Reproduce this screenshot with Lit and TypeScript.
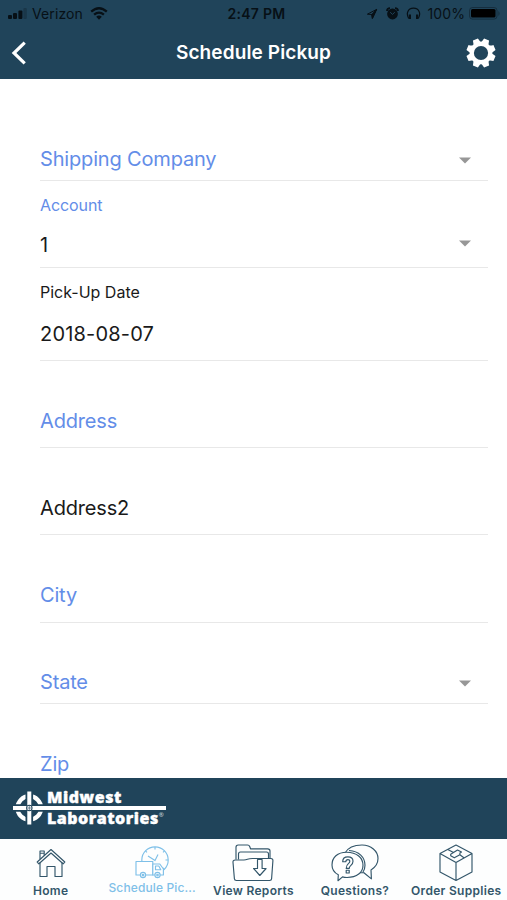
import { LitElement, html, css, svg, nothing } from "lit";
import { customElement, property } from "lit/decorators.js";
import { classMap } from "lit/directives/class-map.js";

type Field = { label: string; value?: string; tone: "link" | "ink"; select?: boolean; size: string };

const FIELDS: Field[] = [
  { label: "Shipping Company", tone: "link", select: true, size: "first" },
  { label: "Account", value: "1", tone: "link", select: true, size: "account" },
  { label: "Pick-Up Date", value: "2018-08-07", tone: "ink", size: "date" },
  { label: "Address", tone: "link", size: "line" },
  { label: "Address2", tone: "ink", size: "line" },
  { label: "City", tone: "link", size: "line tall" },
  { label: "State", tone: "link", select: true, size: "state" },
  { label: "Zip", tone: "link", size: "zip" },
];

@customElement("status-bar")
export class StatusBar extends LitElement {
  static styles = css`
    :host { display: flex; height: 27px; align-items: center; color: #071016; font: 14px/18px Inter, sans-serif; padding: 0 6px 0 8px; box-sizing: border-box; }
    .side { flex: 1; display: flex; align-items: center; }
    .right { justify-content: flex-end; }
    .carrier { margin: 1px 7px 0 5px; letter-spacing: 0.1px; }
    .time { font-weight: 600; letter-spacing: 0.3px; margin: 1px 0 0 4px; }
    .pct { margin: 1px 4px 0 6px; letter-spacing: 0.1px; }
    svg { display: block; flex: none; }
    .gap { margin-left: 8px; }
    .gap2 { margin-left: 7px; }
  `;
  render() {
    return html`
      <div class="side">
        <svg width="19" height="12" viewBox="0 0 19 12" fill="currentColor">
          <rect x="0" y="7" width="4" height="4" rx="1"/><rect x="5" y="5" width="4" height="6" rx="1"/>
          <rect x="10.4" y="2.5" width="4" height="8.5" rx="1"/><rect x="15.4" y="0" width="3.4" height="11" rx="1" opacity=".25"/>
        </svg>
        <span class="carrier">Verizon</span>
        <svg width="18" height="13" viewBox="0 0 18 13" fill="none" stroke="currentColor" stroke-width="2.3">
          <path d="M1.2 4.7Q9-2.3 16.8 4.7"/><path d="M4.1 7.7Q9 3.5 13.9 7.7"/><path d="M6.2 9.8Q9 7.4 11.8 9.8L9 12.7z" fill="currentColor" stroke="none"/>
        </svg>
      </div>
      <span class="time">2:47 PM</span>
      <div class="side right">
        <svg width="12" height="12" viewBox="0 0 12 12" fill="none" stroke="currentColor" stroke-width="1"><path d="M1.4 6.2L10.6 1.4 6.4 10.4 5.8 6.5z"/><path d="M5.8 6.5L10.6 1.4 6.4 10.4z" fill="currentColor"/></svg>
        <svg class="gap" width="13" height="13" viewBox="0 0 13 13"><circle cx="6.5" cy="7" r="5.4" fill="currentColor"/><path d="M1 4A3 3 0 0 1 4 1.1M9 1.1A3 3 0 0 1 12 4" stroke="currentColor" stroke-width="1.8" fill="none"/><path d="M4.2 5.2L6.5 7.4 8.8 5.2" fill="none" stroke="#20445a" stroke-width="1"/></svg>
        <svg class="gap2" width="15" height="13" viewBox="0 0 15 13" fill="none" stroke="currentColor"><path d="M2.7 11.5C0 7 1.4 1.2 7.5 1.2S15 7 12.3 11.5" stroke-width="1.2"/><path d="M3.9 7.5v4.6M11.1 7.5v4.6" stroke-width="2.2"/></svg>
        <span class="pct">100%</span>
        <svg width="32" height="13" viewBox="0 0 32 13"><rect x=".5" y=".5" width="27.5" height="11.6" rx="3" fill="none" stroke="currentColor" opacity=".4"/><rect x="2" y="2" width="24.5" height="8.6" rx="1.5" fill="#000"/><path d="M29.5 4v5q2-2.5 0-5" fill="currentColor" opacity=".5"/></svg>
      </div>
    `;
  }
}

@customElement("form-field")
export class FormField extends LitElement {
  @property({ attribute: false }) field!: Field;
  static styles = css`
    :host { display: block; font-family: Inter, sans-serif; color: #1a1a1a; }
    .row { box-sizing: border-box; display: flex; flex-direction: column; justify-content: flex-end; margin-left: 40px; margin-right: 19px; border-bottom: 1px solid #e8e8e8; }
    .first { height: 102px; padding-bottom: 9px; }
    .account { height: 87px; padding-bottom: 10px; }
    .date { height: 93px; padding-bottom: 14px; }
    .line { height: 87px; padding-bottom: 14px; }
    .tall { height: 88px; padding-bottom: 15px; }
    .state { height: 81px; padding-bottom: 9px; }
    .zip { height: 82px; padding-bottom: 9px; }
    .label { font-size: 16px; line-height: 20px; letter-spacing: -0.1px; }
    .date .label { letter-spacing: 0; }
    .account .label { margin-bottom: 18px; }
    .date .label { margin-bottom: 20px; }
    .main { display: flex; align-items: center; justify-content: space-between; font-size: 20px; line-height: 24px; padding-right: 17px; letter-spacing: 0.18px; }
    .link .label, .link .bare { color: #638de8; }
    .bare { letter-spacing: -0.17px; }
    svg { display: block; margin-top: 2px; }
    .account svg { margin-top: -4px; }
  `;
  render() {
    const f = this.field;
    return html`<div class="row ${f.size} ${f.tone}">
      ${f.value ? html`<div class="label">${f.label}</div>` : nothing}
      <div class="main">
        <span class=${classMap({ bare: !f.value })}>${f.value ?? f.label}</span>
        ${f.select ? html`<svg width="12" height="7" viewBox="0 0 12 7"><path d="M0 .5h12L6 6.5z" fill="#979797"/></svg>` : nothing}
      </div>
    </div>`;
  }
}

const home = svg`<path d="M1.2 14L15 1.5 28.8 14l-1.7 1.8L15 5 2.9 15.8z"/><path d="M4 14.5V28.5h7V18.5h8v10h7v-14M4 11V3h4.2v4.5M4 5.2h4.2"/>`;
const truck = svg`<circle cx="20" cy="14" r="13.2"/><path d="M13 10l7 4.6L23 8.5M20 1v2.5M33 14h-2.5M10.5 4.8l1.5 1.5M29.5 4.8L28 6.3M29.5 23.3L28 21.8"/><path d="M1 15.5h16.8V29H1z" fill="#fff"/><path d="M17.8 18h7l3.6 5V29H17.8z" fill="#fff"/><path d="M20.5 20h3.3l2 3.7h-5.3z"/><circle cx="8" cy="29" r="2.6" fill="#fff"/><circle cx="22.5" cy="29" r="2.6" fill="#fff"/><circle cx="8" cy="29" r=".8"/><circle cx="22.5" cy="29" r=".8"/>`;
const folder = svg`<path d="M4 15.5V3.2Q4 1 6.2 1h9.3q1.8 0 2.3 1.8l.7 2h17.2q2.3 0 2.3 2.3v9.5"/><path d="M6.5 15.5V10q0-2 2-2h26q2 0 2 2v5.5"/><path d="M6.5 16H3.2q-2.4 0-2.2 2.3l1.4 16.5q.1 1.7 2 1.7h33.2q1.9 0 2-1.7l1.3-18q.1-2.3-2-2.3H20.5q-3 0-5 .8t-4 .7z" fill="#fff"/><path d="M25.5 15.5h4.6v9h4L27.8 31.5 21.6 24.5h3.9z" fill="#fff"/>`;
const chat = svg`<path d="M14 9C17 3.5 23.5 1 31 1c9 0 16 6 16 13.5 0 5-2.7 8.8-7 11.4l.4 9-7.5-6.2q-2.5.2-4-.2"/><path d="M15.5 8.2C26 8.2 32 14 32 21.2S26 33.5 16 33.5q-2.5 0-4.5-.6L7 36.7l.3-5.9C3.5 28.8 1 25 1 21 1 13.5 6.5 8.2 15.5 8.2z" fill="#fff"/><path d="M18 6.5c10 .7 16 6.6 16 14.7q0 4-2.2 7.3"/><path d="M11.7 17.7c0-3.2 2.3-4.8 5.2-4.8 3 0 5.1 1.7 5.1 4.3 0 4.4-3.8 3.8-3.8 7.2h-3c0-5 3.6-4.8 3.6-7 0-1.2-.8-1.8-1.9-1.8-1.3 0-2 .8-2.1 2.1zM15.2 26.2h3v2.8h-3z" fill="#fff"/>`;
const box = svg`<path d="M17 1l16 8.6V28L17 36.5 1 28V9.6zM1 9.6l16 9 16-9M17 18.6v17.9"/><path d="M8.8 5.4l5.7 3.2-2.8 1.6v1.6l3.6 2 5.6-3V9l1.6-1-4-2-4 2.6M25.2 14l-4.3-3.2"/>`;

const TABS = [
  { name: "Home", art: home, w: 30, h: 30, cls: "home" },
  { name: "Schedule Pic...", art: truck, w: 34, h: 33, cls: "pick" },
  { name: "View Reports", art: folder, w: 42, h: 38, cls: "reports" },
  { name: "Questions?", art: chat, w: 48, h: 39, cls: "questions" },
  { name: "Order Supplies", art: box, w: 34, h: 38, cls: "supplies" },
];

@customElement("tab-bar")
export class TabBar extends LitElement {
  static styles = css`
    :host { display: grid; grid-template-columns: repeat(5, 1fr); height: 61px; background: #fdfefe; font: 600 12px/14px Inter, sans-serif; color: #33566a; }
    .tab { display: flex; flex-direction: column; align-items: center; justify-content: flex-end; padding-bottom: 2px; gap: 2px; white-space: nowrap; letter-spacing: 0.3px; }
    .home { gap: 6px; }
    .pick { color: #7fc0e8; padding-bottom: 5px; gap: 2px; letter-spacing: 0.12px; font-weight: 500; }
    .questions { gap: 1px; }
    svg { display: block; stroke: currentColor; stroke-width: 1.15; fill: none; stroke-linejoin: round; }
  `;
  render() {
    return TABS.map((t) => html`<div class="tab ${t.cls}">
      <svg width=${t.w} height=${t.h} viewBox="0 0 ${t.w} ${t.h}">${t.art}</svg><span>${t.name}</span>
    </div>`);
  }
}

@customElement("app-root")
export class AppRoot extends LitElement {
  static styles = css`
    :host { display: flex; flex-direction: column; height: 900px; background: #fff; overflow: hidden; font-family: Inter, sans-serif; }
    .head { background: #20445a; height: 79px; flex: none; }
    .nav { display: grid; grid-template-columns: 60px 1fr 60px; align-items: center; height: 51px; }
    .title { text-align: center; color: #fff; font-size: 19px; font-weight: 600; line-height: 24px; letter-spacing: 0.12px; }
    .back { margin-left: 11px; display: block; }
    .gear { justify-self: end; margin-right: 11px; display: block; }
    .form { flex: 1; overflow: hidden; min-height: 0; }
    .brand { height: 61px; flex: none; background: #20445a; display: flex; align-items: flex-start; padding: 11px 0 0 12px; box-sizing: border-box; color: #fff; }
    .lockup { display: grid; grid-template-columns: 35px auto; }
    .mark { display: block; }
    .words { display: flex; flex-direction: column; font: 800 16px/17px "Open Sans", sans-serif; letter-spacing: 0.55px; -webkit-text-stroke: 0.4px #fff; }
    .rule { height: 4px; background: #fff; width: 121px; margin-left: -2px; }
    .bottom { display: flex; line-height: 16px; letter-spacing: 0.5px; }
    .reg { font-size: 6px; line-height: 11px; font-weight: 400; -webkit-text-stroke: 0; letter-spacing: 0; opacity: 0.8; }
    tab-bar { flex: none; }
  `;
  render() {
    return html`
      <div class="head">
        <status-bar></status-bar>
        <div class="nav">
          <svg class="back" width="17" height="24" viewBox="0 0 17 24"><path d="M13.7 1.6L3 12l10.7 10.4" fill="none" stroke="#fff" stroke-width="3.2"/></svg>
          <div class="title">Schedule Pickup</div>
          <svg class="gear" width="30" height="30" viewBox="-15 -15 30 30">
            <g fill="#fff">${[0, 45, 90, 135, 180, 225, 270, 315].map((a) => svg`<path d="M-5.2-9Q-3-11-2.7-14.6L2.7-14.6Q3-11 5.2-9z" transform="rotate(${a + 22.5})"/>`)}<circle r="10.8"/></g>
            <circle r="7.1" fill="#20445a"/>
          </svg>
        </div>
      </div>
      <div class="form">${FIELDS.map((f) => html`<form-field .field=${f}></form-field>`)}</div>
      <div class="brand">
        <div class="lockup">
          <svg class="mark" width="35" height="37" viewBox="0 0 35 37">
            <circle cx="17.3" cy="19" r="11.8" fill="none" stroke="#fff" stroke-width="4.2"/>
            <path d="M17.3 2v34M1 19h34" stroke="#20445a" stroke-width="7.6"/>
            <path d="M17.3 2.5v33M1 19h34" stroke="#fff" stroke-width="4"/>
            <circle cx="17.3" cy="19" r="3.2" fill="#20445a"/><circle cx="17.3" cy="19" r="2.3" fill="#fff"/><path d="M17.3 16v6M14.3 19h6" stroke="#20445a" stroke-width=".6"/>
          </svg>
          <div class="words"><span>Midwest</span><span class="rule"></span><span class="bottom">Laboratories<span class="reg">®</span></span></div>
        </div>
      </div>
      <tab-bar></tab-bar>
    `;
  }
}
